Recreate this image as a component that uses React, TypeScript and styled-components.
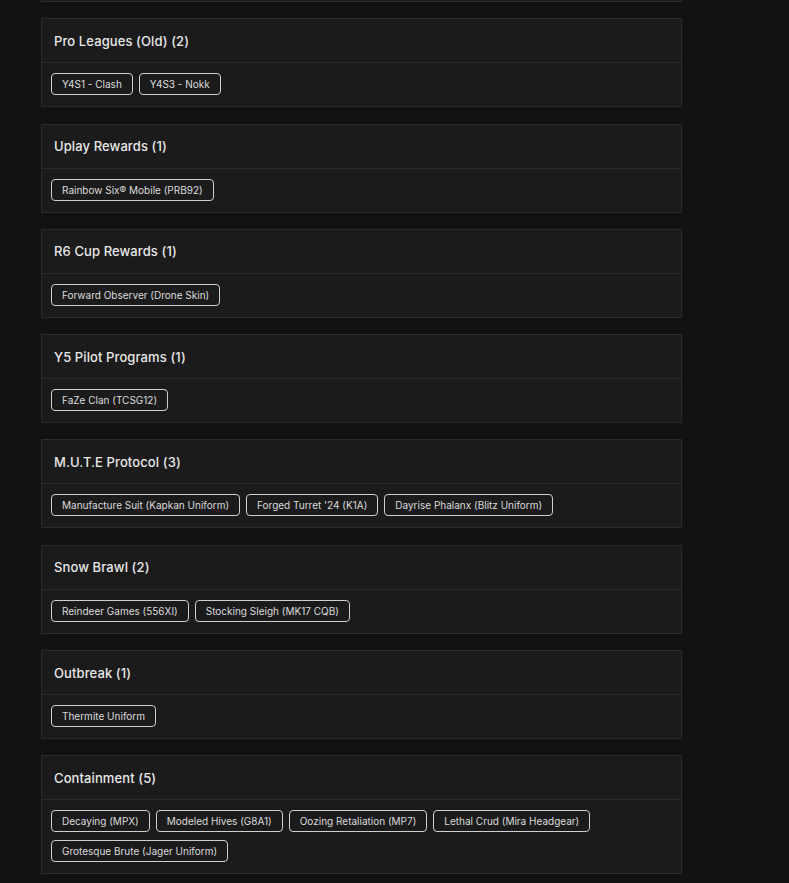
import styled, { createGlobalStyle } from "styled-components";

const GlobalStyle = createGlobalStyle`
  html, body {
    margin: 0;
    padding: 0;
    background: #121212;
  }
  body {
    font-family: Inter, "Noto Sans", "Liberation Sans", sans-serif;
    color: #e6e6e6;
  }
`;

const Page = styled.div`
  width: 641px;
  margin-left: 41px;
  display: flex;
  flex-direction: column;
  gap: 16.3px;
`;

const Card = styled.section`
  background: #1b1b1b;
  border: 1px solid #2b2b2b;
  border-radius: 1px;
`;

// bottom edge of the card scrolled above the fold
const CardTail = styled.div`
  height: 1px;
  background: #1b1b1b;
  border: 1px solid #2b2b2b;
  border-top: none;
`;

const Header = styled.div`
  height: 43px;
  display: flex;
  align-items: center;
  padding: 0 12px;
  border-bottom: 1px solid #2b2b2b;
  font-size: 13px;
  font-weight: 500;
  letter-spacing: 0.1px;
  color: #e8e8e8;
`;

const Body = styled.div`
  display: flex;
  flex-wrap: wrap;
  gap: 8px 6px;
  padding: 10px 9px 11px;
`;

const Chip = styled.span`
  height: 22px;
  box-sizing: border-box;
  display: inline-flex;
  align-items: center;
  padding: 0 10px;
  border: 1px solid #cfcfcf;
  border-radius: 4px;
  font-size: 10px;
  color: #dcdcdc;
  white-space: nowrap;
`;

type Group = { name: string; items: string[] };

const groups: Group[] = [
  { name: "Pro Leagues (Old)", items: ["Y4S1 - Clash", "Y4S3 - Nokk"] },
  { name: "Uplay Rewards", items: ["Rainbow Six® Mobile (PRB92)"] },
  { name: "R6 Cup Rewards", items: ["Forward Observer (Drone Skin)"] },
  { name: "Y5 Pilot Programs", items: ["FaZe Clan (TCSG12)"] },
  {
    name: "M.U.T.E Protocol",
    items: [
      "Manufacture Suit (Kapkan Uniform)",
      "Forged Turret '24 (K1A)",
      "Dayrise Phalanx (Blitz Uniform)",
    ],
  },
  { name: "Snow Brawl", items: ["Reindeer Games (556XI)", "Stocking Sleigh (MK17 CQB)"] },
  { name: "Outbreak", items: ["Thermite Uniform"] },
  {
    name: "Containment",
    items: [
      "Decaying (MPX)",
      "Modeled Hives (G8A1)",
      "Oozing Retaliation (MP7)",
      "Lethal Crud (Mira Headgear)",
      "Grotesque Brute (Jager Uniform)",
    ],
  },
];

const App = () => {
  return (
    <>
      <GlobalStyle />
      <Page>
        <CardTail />
        {groups.map((g) => (
          <Card key={g.name}>
            <Header>
              {g.name} ({g.items.length})
            </Header>
            <Body>
              {g.items.map((item) => (
                <Chip key={item}>{item}</Chip>
              ))}
            </Body>
          </Card>
        ))}
      </Page>
    </>
  );
};

export default App;
